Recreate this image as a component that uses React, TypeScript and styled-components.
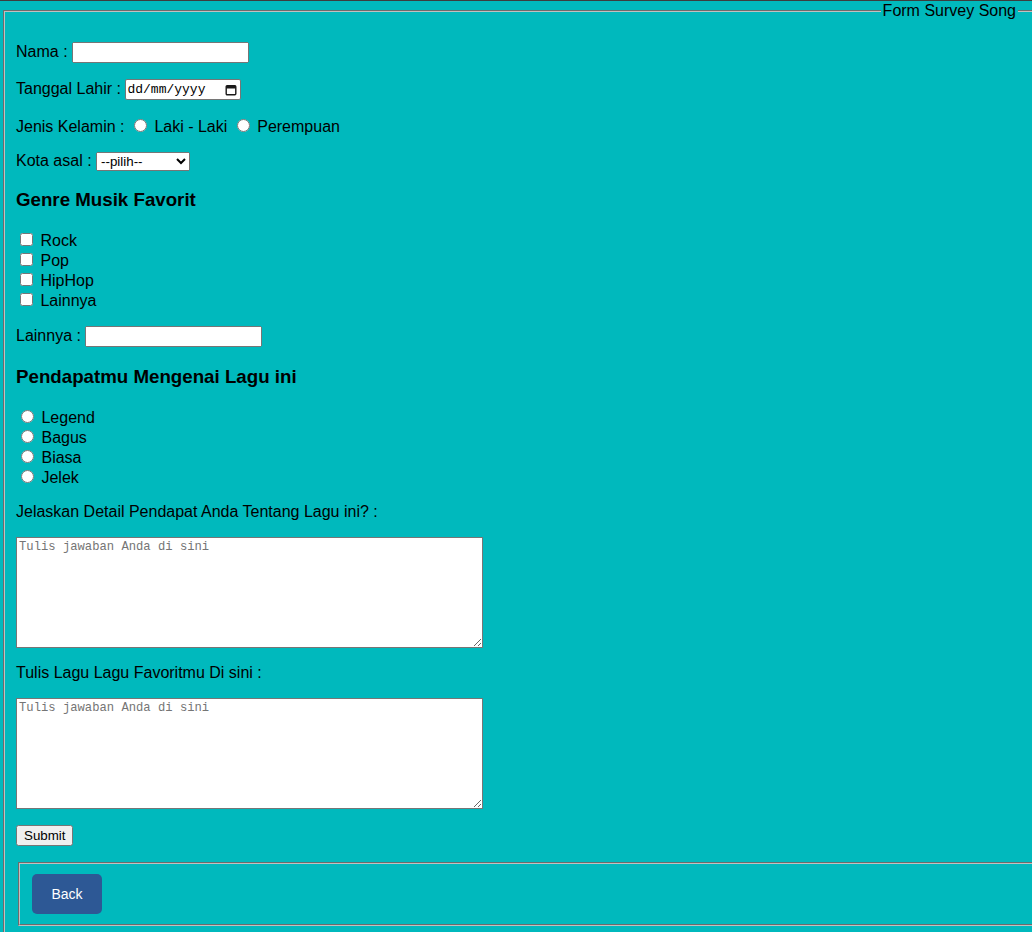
import React from "react";
import styled, { createGlobalStyle } from "styled-components";

const GlobalStyle = createGlobalStyle`
  html {
    overflow: hidden;
    background: #00b9bd;
  }
  body {
    margin: 0;
    border-top: 1px solid #3d3d3d;
    background: #00b9bd;
    color: #000;
    font-family: "Liberation Sans", Arial, sans-serif;
    font-size: 16px;
  }
`;

const SurveyFieldset = styled.fieldset`
  box-sizing: border-box;
  width: 1060px;
  margin: 1px 0 0 3px;
  padding: 5.6px 11px 10px;
  border: 2px groove rgb(192, 192, 192);
`;

const Legend = styled.legend`
  margin-left: auto;
  margin-right: 32px;
  padding: 0 2px;
  font-size: 16px;
`;

const Row = styled.p`
  margin: 16px 0;
`;

const TextInput = styled.input`
  box-sizing: border-box;
  width: 177px;
  font: 13.333px "Liberation Sans", Arial, sans-serif;
`;

const DateField = styled.span`
  box-sizing: border-box;
  display: inline-flex;
  align-items: center;
  width: 116px;
  height: 21px;
  padding: 1px 3px 0 1px;
  border: 1px solid #767676;
  border-radius: 2px;
  background: #fff;
  font: 13px "Liberation Mono", "DejaVu Sans Mono", monospace;
  color: #000;
  vertical-align: baseline;
`;

const DateText = styled.span`
  flex: 1;
`;

const Radio = styled.input`
  font: 13.333px "Liberation Sans", Arial, sans-serif;
`;

const Select = styled.select`
  box-sizing: border-box;
  width: 94px;
  height: 19px;
  font: 13.333px "Liberation Sans", Arial, sans-serif;
  color: #000;
`;

const SectionTitle = styled.h3`
  margin: 18.72px 0;
  font-size: 18.72px;
  font-weight: bold;
`;

const OptionList = styled.div<{ $inset?: number }>`
  margin: 16px 0;
  padding-top: ${(p) => p.$inset ?? 0}px;
`;

const OptionLine = styled.label`
  display: block;
`;

const AnswerBox = styled.textarea`
  display: block;
  box-sizing: border-box;
  width: 467px;
  height: 111px;
  margin: 16px 0;
  padding: 2px;
  border: 1px solid #767676;
  background: #fff;
  font: 12.2px "Liberation Mono", "DejaVu Sans Mono", monospace;
  &::placeholder {
    color: #757575;
  }
`;

const SubmitButton = styled.button`
  font: 13.333px "Liberation Sans", Arial, sans-serif;
  color: #000;
`;

const NavFieldset = styled.fieldset`
  margin: 0 2px;
  padding: 10px 12px;
  border: 2px groove rgb(192, 192, 192);
`;

const BackButton = styled.button`
  display: inline-flex;
  align-items: center;
  justify-content: center;
  width: 70px;
  height: 40px;
  border: none;
  border-radius: 5px;
  background: #2d5895;
  color: #fff;
  font: 14px "Liberation Sans", Arial, sans-serif;
  cursor: pointer;
`;

const CalendarIcon = () => (
  <svg width="12" height="12" viewBox="0 0 12 12" aria-hidden="true">
    <rect x="1.2" y="1.7" width="9.6" height="9.1" rx="1" fill="none" stroke="#1a1a1a" strokeWidth="1.4" />
    <rect x="1.2" y="1.7" width="9.6" height="2.8" fill="#1a1a1a" />
  </svg>
);

const genres = ["Rock", "Pop", "HipHop", "Lainnya"];
const opinions = ["Legend", "Bagus", "Biasa", "Jelek"];

export default function App() {
  return (
    <>
      <GlobalStyle />
      <form onSubmit={(e) => e.preventDefault()}>
        <SurveyFieldset>
          <Legend>Form Survey Song</Legend>
          <Row>
            Nama : <TextInput type="text" />
          </Row>
          <Row>
            Tanggal Lahir :{" "}
            <DateField>
              <DateText>dd/mm/yyyy</DateText>
              <CalendarIcon />
            </DateField>
          </Row>
          <Row>
            Jenis Kelamin : <Radio type="radio" name="jk" /> Laki - Laki{" "}
            <Radio type="radio" name="jk" /> Perempuan
          </Row>
          <Row>
            Kota asal :{" "}
            <Select defaultValue="">
              <option value="">--pilih--</option>
            </Select>
          </Row>
          <SectionTitle>Genre Musik Favorit</SectionTitle>
          <OptionList>
            {genres.map((g) => (
              <OptionLine key={g}>
                <input type="checkbox" /> {g}
              </OptionLine>
            ))}
          </OptionList>
          <Row>
            Lainnya : <TextInput type="text" />
          </Row>
          <SectionTitle>Pendapatmu Mengenai Lagu ini</SectionTitle>
          <OptionList $inset={1}>
            {opinions.map((o) => (
              <OptionLine key={o}>
                <Radio type="radio" name="pendapat" /> {o}
              </OptionLine>
            ))}
          </OptionList>
          <Row>Jelaskan Detail Pendapat Anda Tentang Lagu ini? :</Row>
          <AnswerBox placeholder="Tulis jawaban Anda di sini" />
          <Row>Tulis Lagu Lagu Favoritmu Di sini :</Row>
          <AnswerBox placeholder="Tulis jawaban Anda di sini" />
          <Row>
            <SubmitButton type="submit">Submit</SubmitButton>
          </Row>
          <NavFieldset>
            <BackButton type="button">Back</BackButton>
          </NavFieldset>
        </SurveyFieldset>
      </form>
    </>
  );
}
